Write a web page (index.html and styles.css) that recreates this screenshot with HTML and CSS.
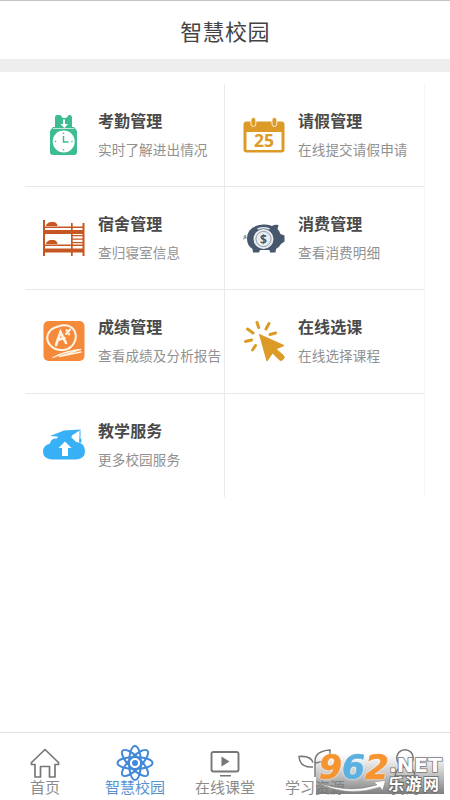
FILE: index.html
```html
<!DOCTYPE html>
<html lang="zh-CN">
<head>
<meta charset="utf-8">
<title>智慧校园</title>
<link rel="stylesheet" href="styles.css">
</head>
<body>
<div class="app">
  <header class="header"><h1>智慧校园</h1></header>
  <main class="main">
    <div class="grid">
      <a class="cell">
        <svg class="icon" viewBox="0 0 42 42">
          <g fill="#3dbb91"><path d="M12 15V3.500q0-2.500 2.500-2.500h2.500q1 0 1.500 1.500t3 1.500 3-1.500 1.500-1.500h1q2 0 2 2.500V15z"/><path d="M10 13h21l3 4v21q0 3-3 3H10q-3 0-3-3V17z"/></g>
          <path d="M20 5.500h2V10H25l-3.700 4-3.800-4H20z" fill="#fff"/><path d="M10 14.500h21" stroke="#c5eadc"/>
          <circle cx="20.700" cy="27.500" r="11" fill="#fff"/>
          <path d="M20.500 22v6h5" fill="none" stroke="#3dbb91" stroke-width="1.500"/>
          <g fill="#3dbb91"><circle cx="20.500" cy="19.300" r=".8"/><circle cx="20.500" cy="35.700" r=".8"/><circle cx="12.500" cy="27.500" r=".8"/><circle cx="29" cy="27.500" r=".8"/></g>
        </svg>
        <div class="text"><h2>考勤管理</h2><p>实时了解进出情况</p></div>
      </a>
      <a class="cell">
        <svg class="icon" viewBox="0 0 42 42">
          <rect x=".5" y="7.500" width="41" height="31" rx="3" fill="#dc9a27"/>
          <rect x="3.500" y="18" width="35" height="18" fill="#fff"/>
          <g fill="#dc9a27" stroke="#fff" stroke-width=".8"><rect x="8" y="3.500" width="4.800" height="9" rx="2.400"/><rect x="29" y="3.500" width="4.800" height="9" rx="2.400"/></g>
          <text class="date" x="21" y="33" textLength="20" lengthAdjust="spacingAndGlyphs">25</text>
        </svg>
        <div class="text"><h2>请假管理</h2><p>在线提交请假申请</p></div>
      </a>
      <a class="cell">
        <svg class="icon" viewBox="0 0 42 42">
          <g fill="#c75722"><path d="M0 3h2v36H0zM39.500 6h2v33h-2zM28 6h1.700v33H28z"/><path d="M2 9.500h38V11H2zM2 13h38v4H2zM2 27.500h38V29H2zM2 31.500h38v4H2z"/><path d="M3 9q0-2 1.500-2.500Q5.500 4.500 9 5q3-.5 4 1 1.500 1 1.500 3zM3 27q0-2 1.500-2.500 1-2 4.500-1.500 3-.5 4 1 1.500 1 1.500 3zM29 18h11v1.200H29zM29 21.500h11v1.200H29zM29 25h11v1.200H29z"/></g>
        </svg>
        <div class="text"><h2>宿舍管理</h2><p>查归寝室信息</p></div>
      </a>
      <a class="cell">
        <svg class="icon" viewBox="0 0 42 42">
          <path d="M4 22Q4 9 20 7.500q6-.5 9 1.500 3-2 6.500-1L34.500 12q2 2 3 5l4 1.500v6L38 27q-2 3.500-5 5l-.5 3.500H27L26.500 33H17l-1 2.500h-6L9.500 32Q4 28.500 4 22z" fill="#47576d"/>
          <path d="M14.500 12q6-2.500 12 0" fill="none" stroke="#e3e7ec" stroke-width="1.500"/>
          <circle cx="20.500" cy="22" r="10" fill="#e9edf1"/><circle cx="20.500" cy="22" r="7.600" fill="none" stroke="#7b8797" stroke-width=".8"/>
          <text class="coin" x="20.500" y="26.500">$</text>
          <path d="M4 21q-4 0-3-2 2-2 2 1-1 2-3 2" fill="none" stroke="#697687" stroke-width=".8"/>
        </svg>
        <div class="text"><h2>消费管理</h2><p>查看消费明细</p></div>
      </a>
      <a class="cell">
        <svg class="icon" viewBox="0 0 42 42">
          <rect x=".5" y="1" width="41" height="40" rx="5" fill="#f68a3b"/>
          <g fill="none" stroke="#fff4e6" stroke-linecap="round"><path d="M15.500 6.200C4 9 1 19 8 26c7 6.500 19 5 23-3 4-7 1-16-7-17.500-3-.6-6-.3-8 1" stroke-width="2"/><path d="M13 25l4.500-13L23 23M14.500 20l7-2" stroke-width="2.600"/><path d="M23.500 10l2.700 4.500m1-5L23 14" stroke-width="2"/><path d="M10 37.500Q23 31 38 29.500L16 36.500 38 32" stroke-width="1.300"/></g>
        </svg>
        <div class="text"><h2>成绩管理</h2><p>查看成绩及分析报告</p></div>
      </a>
      <a class="cell">
        <svg class="icon" viewBox="0 0 42 42">
          <path d="M16.500 14.500L41 25.500l-8 3.500 7.500 6.500q1.500 2-.5 4t-4 0L29.500 33 24 41z" fill="#dc9a27" stroke="#dc9a27" stroke-linejoin="round"/>
          <path d="M14 2.500l1.700 5M26 3.500l-3 5.500M4.500 9l5.500 4M2.500 21.500l6-1.500M9.500 30l3-4.500M27 14.500l5.500-1.500" fill="none" stroke="#dc9a27" stroke-width="3" stroke-linecap="round"/>
        </svg>
        <div class="text"><h2>在线选课</h2><p>在线选择课程</p></div>
      </a>
      <a class="cell">
        <svg class="icon" viewBox="0 0 42 42">
          <path d="M9 35.500Q0 35 0 27.500q0-6 7-8Q8 14 14 14.500q4-5 11-4 6 0 8.500 7.500 8.500 1 8.500 9t-9 8.500z" fill="#38b0f5"/>
          <path d="M7 12l14-5.500 17-1-10.500 7L30 22q-7-8-15-6l-.5-3.500z" fill="#38b0f5"/>
          <path d="M37 6v7" stroke="#38b0f5"/><path d="M36.500 12l2 4v2.500H36z" fill="#38b0f5"/>
          <path d="M28 13l7-5v8.500L33 18" fill="#fff"/>
          <path d="M22 17.500l6.500 6.500H25v8h-6v-8h-3.500z" fill="#fff"/>
        </svg>
        <div class="text"><h2>教学服务</h2><p>更多校园服务</p></div>
      </a>
      <div class="cell"></div>
    </div>
  </main>
  <nav class="tabs">
    <a class="tab">
      <svg class="tab-icon" viewBox="0 0 40 40"><path d="M20 6.500L6.500 19.500v2H10V34h5.500V23.500h9V34H30V21.500h3.500v-2z" fill="none" stroke="#777" stroke-width="1.700" stroke-linejoin="round"/></svg>
      <span>首页</span>
    </a>
    <a class="tab active">
      <svg class="tab-icon" viewBox="0 0 40 40"><g fill="none" stroke="#4389d9" stroke-width="2"><ellipse cx="20" cy="20" rx="17.500" ry="6"/><ellipse cx="20" cy="20" rx="17.500" ry="6" transform="rotate(45 20 20)"/><ellipse cx="20" cy="20" rx="17" ry="6" transform="rotate(90 20 20)"/><ellipse cx="20" cy="20" rx="17.500" ry="6" transform="rotate(135 20 20)"/></g><circle cx="20" cy="20" r="3" fill="#4389d9"/></svg>
      <span>智慧校园</span>
    </a>
    <a class="tab">
      <svg class="tab-icon" viewBox="0 0 40 40"><rect x="6.500" y="9" width="27" height="19.500" rx="2" fill="none" stroke="#777" stroke-width="1.900"/><path d="M16.500 13.500l8 5-8 5zM15 32h11v1.500H15z" fill="#777"/></svg>
      <span>在线课堂</span>
    </a>
    <a class="tab">
      <svg class="tab-icon" viewBox="0 0 40 40"><path d="M20 34V18q0-10 15-11 1 11-15 13M18 24Q5 25 4 13.500q12-1 14 6" fill="none" stroke="#777" stroke-width="1.500"/></svg>
      <span>学习资源</span>
    </a>
    <a class="tab">
      <svg class="tab-icon" viewBox="0 0 40 40"><circle cx="20" cy="15" r="8.300" fill="none" stroke="#777" stroke-width="1.500"/><path d="M10 33q1-9 10-9t10 9z" fill="none" stroke="#777" stroke-width="1.500"/></svg>
      <span>我的</span>
    </a>
  </nav>
  <svg class="watermark" viewBox="0 0 134 50">
    <defs>
      <linearGradient id="shade" x1="0" y1="0" x2="0" y2="1"><stop offset="0" stop-color="#888" stop-opacity="0"/><stop offset=".5" stop-color="#808080" stop-opacity=".45"/><stop offset="1" stop-color="#747474" stop-opacity=".92"/></linearGradient>
    </defs>
    <rect x="1" y="4" width="128" height="40" fill="url(#shade)"/>
    <path d="M3 32.500Q33 44 62 35l-3-3 11.500-1.500-3 10-2.500-3.500Q31 48 3 32.500z" fill="#fff" stroke="#777" stroke-width=".4"/>
    <g class="digits"><text class="orange" x="4" y="28.500" textLength="23" lengthAdjust="spacingAndGlyphs">9</text><text class="blue" x="27" y="28.500" textLength="23" lengthAdjust="spacingAndGlyphs">6</text><text class="orange" x="50" y="28.500" textLength="24" lengthAdjust="spacingAndGlyphs">2</text></g>
    <text class="domain" x="74" y="22" textLength="53" lengthAdjust="spacingAndGlyphs">.NET</text>
    <text class="site" x="73" y="40" textLength="51">乐游网</text>
  </svg>
</div>
</body>
</html>
```

FILE: styles.css
```css
* {
  box-sizing: border-box;
}

body {
  margin: 0;
  background: #fff;
  font-family: "Noto Sans CJK SC", sans-serif;
}

h1, h2, p {
  margin: 0;
}

.app {
  position: relative;
  display: flex;
  flex-direction: column;
  width: 450px;
  height: 800px;
  overflow: hidden;
  border-top: 1px solid #c4c4c4;
}

.header {
  height: 71px;
  border-bottom: 13px solid #eee;
  display: flex;
  align-items: center;
  justify-content: center;
}

.header h1 {
  font-size: 22px;
  line-height: 30px;
  letter-spacing: 0.4px;
  font-weight: 400;
  color: #444;
  padding-bottom: 1px;
}

.main {
  flex: 1;
  padding: 12px 25px 0;
}

.grid {
  display: grid;
  grid-template-columns: 200px 200px;
  grid-auto-rows: 103.2px;
}

.cell {
  display: flex;
  padding: 0 0 0 18px;
  border-right: 1px solid #eaeaea;
  border-bottom: 1px solid #e8e8e8;
}

.cell:nth-child(even) {
  border-right-color: #f5f5f5;
}

.cell:nth-child(n+7) {
  border-bottom: 0;
}

.icon {
  width: 42px;
  height: 42px;
  margin-top: 30px;
  flex: none;
}

.text {
  margin: 24px 0 0 13px;
  white-space: nowrap;
}

.text h2 {
  font-size: 16px;
  line-height: 24px;
  letter-spacing: 0.1px;
  font-weight: 700;
  color: #4a4a4a;
}

.text p {
  margin-top: 7px;
  font-size: 13.6px;
  line-height: 20px;
  letter-spacing: 0.1px;
  color: #919191;
}

.date {
  font: 700 17px "Open Sans", sans-serif;
  fill: #dc9a27;
  text-anchor: middle;
}

.coin {
  font: 700 12px "Open Sans", sans-serif;
  fill: #47576d;
  text-anchor: middle;
}

.tabs {
  display: grid;
  grid-template-columns: repeat(5, 1fr);
  height: 68px;
  border-top: 1px solid #e2e2e2;
}

.tab {
  display: flex;
  flex-direction: column;
  align-items: center;
  padding-top: 10px;
  font-size: 15px;
  line-height: 20px;
  color: #8c8c8c;
}

.tab span {
  margin-top: -6px;
}

.tab.active {
  color: #5593d5;
}

.tab-icon {
  width: 40px;
  height: 40px;
  flex: none;
}

.watermark {
  position: absolute;
  left: 315px;
  top: 749px;
  width: 134px;
  height: 50px;
  overflow: visible;
}

.digits {
  font: italic 700 33px "DejaVu Sans", sans-serif;
  filter: drop-shadow(0 0 1px #fff);
}

.orange {
  fill: #f79432;
  stroke: #f79432;
  stroke-width: 0.6px;
}

.blue {
  fill: #5bb0e0;
  stroke: #5bb0e0;
  stroke-width: 0.6px;
}

.domain {
  font: 700 19px "DejaVu Sans", sans-serif;
  fill: #fff;
  stroke: #777;
  stroke-width: 1.5px;
  paint-order: stroke;
}

.site {
  font: 700 16px "Noto Sans CJK SC", sans-serif;
  fill: #fff;
  stroke: #666;
  stroke-width: 1.5px;
  paint-order: stroke;
}
```
